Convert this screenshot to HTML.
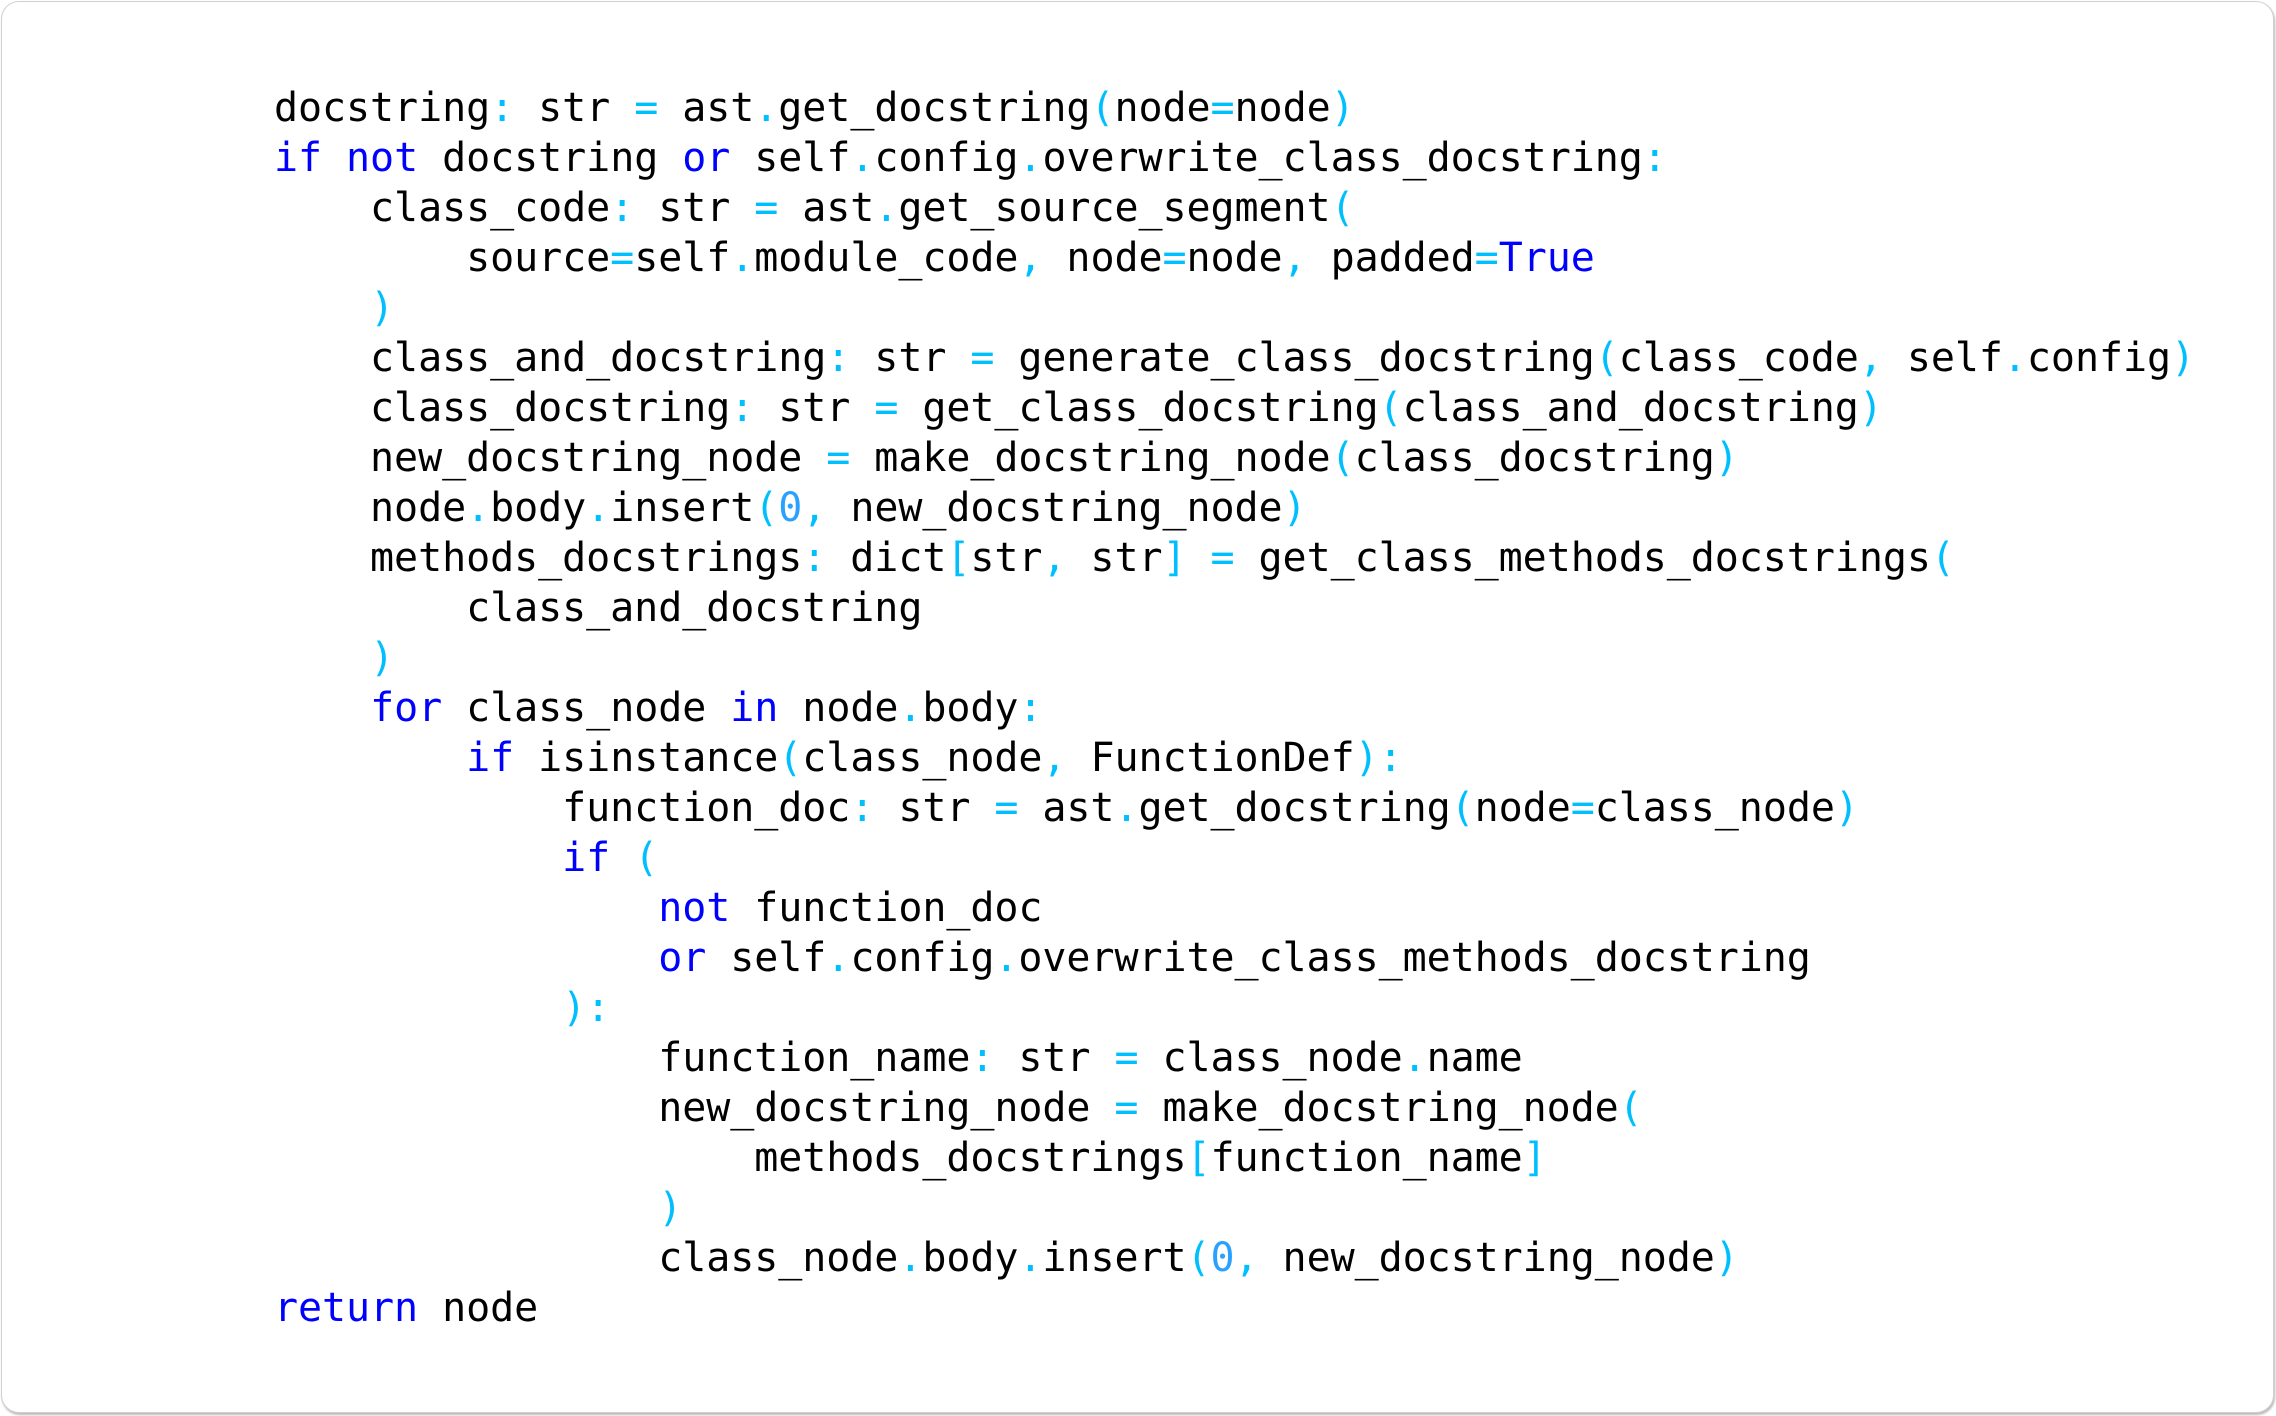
<!DOCTYPE html>
<html><head><meta charset="utf-8"><style>
html,body{margin:0;padding:0;background:#fff;}
body{width:2276px;height:1416px;position:relative;overflow:hidden;}
.card{position:absolute;left:1px;top:1px;width:2273px;height:1412px;border:1px solid #d0d0d0;border-radius:18px;box-shadow:1px 2px 2px #b8b8b8;background:#fff;box-sizing:border-box;}
pre{position:absolute;left:274px;top:83px;margin:0;font-family:"DejaVu Sans Mono","Liberation Mono",monospace;font-size:40px;letter-spacing:-0.07px;line-height:50px;color:#000;}
.k{color:#0000ff}.p{color:#00bfff}.n{color:#2aa1ff}
</style></head><body><div class="card"></div>
<pre>docstring<span class="p">:</span> str <span class="p">=</span> ast<span class="p">.</span>get_docstring<span class="p">(</span>node<span class="p">=</span>node<span class="p">)</span>
<span class="k">if</span> <span class="k">not</span> docstring <span class="k">or</span> self<span class="p">.</span>config<span class="p">.</span>overwrite_class_docstring<span class="p">:</span>
    class_code<span class="p">:</span> str <span class="p">=</span> ast<span class="p">.</span>get_source_segment<span class="p">(</span>
        source<span class="p">=</span>self<span class="p">.</span>module_code<span class="p">,</span> node<span class="p">=</span>node<span class="p">,</span> padded<span class="p">=</span><span class="k">True</span>
    <span class="p">)</span>
    class_and_docstring<span class="p">:</span> str <span class="p">=</span> generate_class_docstring<span class="p">(</span>class_code<span class="p">,</span> self<span class="p">.</span>config<span class="p">)</span>
    class_docstring<span class="p">:</span> str <span class="p">=</span> get_class_docstring<span class="p">(</span>class_and_docstring<span class="p">)</span>
    new_docstring_node <span class="p">=</span> make_docstring_node<span class="p">(</span>class_docstring<span class="p">)</span>
    node<span class="p">.</span>body<span class="p">.</span>insert<span class="p">(</span><span class="n">0</span><span class="p">,</span> new_docstring_node<span class="p">)</span>
    methods_docstrings<span class="p">:</span> dict<span class="p">[</span>str<span class="p">,</span> str<span class="p">]</span> <span class="p">=</span> get_class_methods_docstrings<span class="p">(</span>
        class_and_docstring
    <span class="p">)</span>
    <span class="k">for</span> class_node <span class="k">in</span> node<span class="p">.</span>body<span class="p">:</span>
        <span class="k">if</span> isinstance<span class="p">(</span>class_node<span class="p">,</span> FunctionDef<span class="p">):</span>
            function_doc<span class="p">:</span> str <span class="p">=</span> ast<span class="p">.</span>get_docstring<span class="p">(</span>node<span class="p">=</span>class_node<span class="p">)</span>
            <span class="k">if</span> <span class="p">(</span>
                <span class="k">not</span> function_doc
                <span class="k">or</span> self<span class="p">.</span>config<span class="p">.</span>overwrite_class_methods_docstring
            <span class="p">):</span>
                function_name<span class="p">:</span> str <span class="p">=</span> class_node<span class="p">.</span>name
                new_docstring_node <span class="p">=</span> make_docstring_node<span class="p">(</span>
                    methods_docstrings<span class="p">[</span>function_name<span class="p">]</span>
                <span class="p">)</span>
                class_node<span class="p">.</span>body<span class="p">.</span>insert<span class="p">(</span><span class="n">0</span><span class="p">,</span> new_docstring_node<span class="p">)</span>
<span class="k">return</span> node</pre>
</body></html>
